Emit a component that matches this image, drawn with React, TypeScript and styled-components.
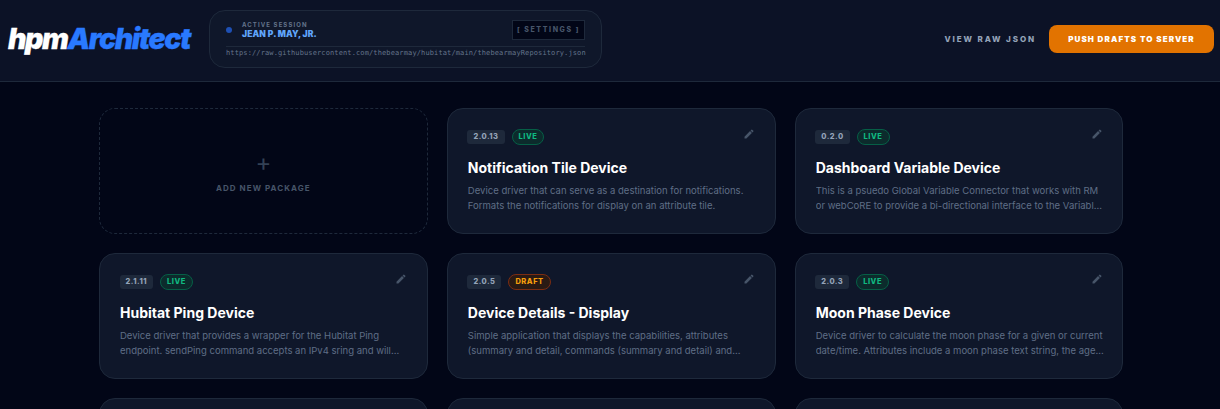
import React from "react";
import styled, { createGlobalStyle } from "styled-components";
import { MdEdit } from "react-icons/md";

const Global = createGlobalStyle`
  html, body { margin: 0; padding: 0; height: 409px; overflow: hidden; background: #020617; }
  * { box-sizing: border-box; }
  body { font-family: Inter, "Liberation Sans", sans-serif; -webkit-font-smoothing: antialiased; }
`;

const Header = styled.header`
  height: 82px;
  display: flex;
  align-items: center;
  padding: 0 6px 4px 8px;
  background: #0c1226;
  border-bottom: 1px solid #1e293b;
`;
const Logo = styled.div`
  width: 201px;
  font-size: 28.5px;
  font-weight: 900;
  font-style: italic;
  letter-spacing: -1.4px;
  color: #fff;
  line-height: 30px;
  -webkit-text-stroke: 0.3px currentColor;
  span { color: #2979ff; }
`;
const Session = styled.div`
  width: 393px;
  height: 58px;
  padding: 9px 16px 0 16px;
  background: #0f172a;
  border: 1px solid #1e293b;
  border-radius: 16px;
`;
const SessionTop = styled.div`
  display: flex;
  align-items: center;
  height: 27px;
  padding-bottom: 5px;
  border-bottom: 1px solid #1e293b;
`;
const Dot = styled.i`
  width: 6px;
  height: 6px;
  border-radius: 50%;
  background: #1e50b4;
  margin-right: 10px;
  flex: none;
`;
const Who = styled.div`
  flex: 1;
  display: flex;
  flex-direction: column;
  padding-top: 1px;
`;
const Label = styled.div`
  font-size: 6px;
  font-weight: 700;
  letter-spacing: 1.1px;
  line-height: 8px;
  color: #64748b;
`;
const Name = styled.div`
  font-size: 8.5px;
  font-weight: 900;
  line-height: 11px;
  color: #60a5fa;
  letter-spacing: 0.1px;
`;
const SettingsBtn = styled.button`
  width: 73px;
  height: 20px;
  margin-top: -1px;
  padding: 0;
  font-family: inherit;
  font-size: 7px;
  font-weight: 800;
  letter-spacing: 1.6px;
  color: #475569;
  background: #020617;
  border: 1px solid #1e293b;
`;
const Url = styled.div`
  font-family: "DejaVu Sans Mono", monospace;
  font-size: 7px;
  line-height: 13px;
  letter-spacing: 0.12px;
  color: #64748b;
  white-space: nowrap;
`;
const Actions = styled.div`
  margin-left: auto;
  display: flex;
  align-items: center;
  gap: 13px;
`;
const RawLink = styled.a`
  font-size: 8px;
  font-weight: 800;
  letter-spacing: 1.9px;
  color: #94a3b8;
`;
const PushBtn = styled.button`
  width: 165px;
  height: 28px;
  padding: 0;
  font-family: inherit;
  font-size: 8px;
  font-weight: 900;
  letter-spacing: 1.1px;
  color: #fff;
  background: #e27300;
  border: none;
  border-radius: 8px;
`;
const Grid = styled.main`
  width: 1024.4px;
  margin: 26px 0 0 99px;
  display: grid;
  grid-template-columns: repeat(3, 1fr);
  grid-auto-rows: 126px;
  gap: 19px 19.2px;
`;
const AddCard = styled.div`
  display: flex;
  flex-direction: column;
  align-items: center;
  justify-content: center;
  padding-top: 2px;
  border: 1px dashed #1e293b;
  border-radius: 16px;
`;
const Plus = styled.div`
  font-size: 24px;
  font-weight: 400;
  line-height: 24px;
  color: #334155;
  margin-bottom: 8px;
`;
const AddLabel = styled.div`
  font-size: 8px;
  font-weight: 700;
  letter-spacing: 1.05px;
  color: #475569;
`;
const Card = styled.article`
  padding: 20px 20px 20px 19.6px;
  background: #0f172a;
  border: 1px solid #1e293b;
  border-radius: 16px;
`;
const CardTop = styled.div`
  display: flex;
  align-items: center;
  gap: 7px;
  height: 15px;
  color: #475569;
  svg { margin-left: auto; margin-top: -5px; margin-right: -0.5px; }
`;
const Version = styled.span`
  padding: 0 6px;
  height: 14px;
  line-height: 14px;
  font-size: 7.5px;
  font-weight: 800;
  letter-spacing: 0.45px;
  color: #94a3b8;
  background: #1e293b;
  border-radius: 3px;
`;
const Status = styled.span<{ $draft?: boolean }>`
  height: 16px;
  line-height: 14px;
  padding: 0 6px;
  font-size: 7.5px;
  font-weight: 800;
  letter-spacing: 0.55px;
  border-radius: 8px;
  border: 1px solid ${p => (p.$draft ? "#7c2d12" : "#065f46")};
  color: ${p => (p.$draft ? "#f59e0b" : "#10b981")};
  background: ${p => (p.$draft ? "#2a1a14" : "#0c2b2c")};
`;
const Title = styled.h3`
  margin: 14px 0 5px 0.4px;
  font-size: 14px;
  line-height: 20px;
  font-weight: 700;
  color: #fff;
  white-space: nowrap;
`;
const Desc = styled.p`
  margin: 0 -2px 0 0.4px;
  font-size: 9.53px;
  line-height: 15px;
  color: #5f6e86;
  display: -webkit-box;
  -webkit-line-clamp: 2;
  -webkit-box-orient: vertical;
  overflow: hidden;
`;

type Pkg = { v: string; draft?: boolean; title: string; desc: string };
const packages: Pkg[] = [
  { v: "2.0.13", title: "Notification Tile Device", desc: "Device driver that can serve as a destination for notifications. Formats the notifications for display on an attribute tile." },
  { v: "0.2.0", title: "Dashboard Variable Device", desc: "This is a psuedo Global Variable Connector that works with RM or webCoRE to provide a bi-directional interface to the Variable and more values" },
  { v: "2.1.11", title: "Hubitat Ping Device", desc: "Device driver that provides a wrapper for the Hubitat Ping endpoint. sendPing command accepts an IPv4 sring and will return the results to attributes" },
  { v: "2.0.5", draft: true, title: "Device Details - Display", desc: "Simple application that displays the capabilities, attributes (summary and detail, commands (summary and detail) and more of the selected devices" },
  { v: "2.0.3", title: "Moon Phase Device", desc: "Device driver to calculate the moon phase for a given or current date/time. Attributes include a moon phase text string, the age of the moon and more" },
];
const peeking = [0, 1, 2];

export default function App() {
  return (
    <>
      <Global />
      <Header>
        <Logo>hpm<span>Architect</span></Logo>
        <Session>
          <SessionTop>
            <Dot />
            <Who>
              <Label>ACTIVE SESSION</Label>
              <Name>JEAN P. MAY, JR.</Name>
            </Who>
            <SettingsBtn>[ SETTINGS ]</SettingsBtn>
          </SessionTop>
          <Url>https://raw.githubusercontent.com/thebearmay/hubitat/main/thebearmayRepository.json</Url>
        </Session>
        <Actions>
          <RawLink>VIEW RAW JSON</RawLink>
          <PushBtn>PUSH DRAFTS TO SERVER</PushBtn>
        </Actions>
      </Header>
      <Grid>
        <AddCard>
          <Plus>+</Plus>
          <AddLabel>ADD NEW PACKAGE</AddLabel>
        </AddCard>
        {packages.map((p, i) => (
          <Card key={i}>
            <CardTop>
              <Version>{p.v}</Version>
              <Status $draft={p.draft}>{p.draft ? "DRAFT" : "LIVE"}</Status>
              <MdEdit size={12} />
            </CardTop>
            <Title>{p.title}</Title>
            <Desc>{p.desc}</Desc>
          </Card>
        ))}
        {peeking.map(i => <Card key={i} />)}
      </Grid>
    </>
  );
}
